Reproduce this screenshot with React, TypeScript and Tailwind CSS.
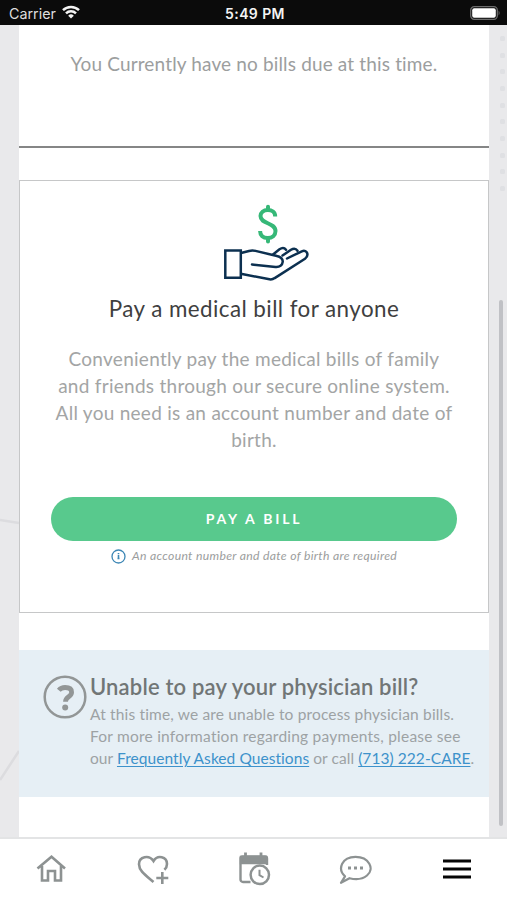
import type { ReactNode } from 'react';

const dots = [38, 55, 71, 88, 105, 121, 138, 155, 171, 188];

function StatusBar() {
  return (
    <header className="flex h-[25px] items-center justify-between bg-[#0b0b0b] pt-[3px] pr-[6px] pl-[9px] font-['Inter','Liberation_Sans',sans-serif] text-[#f4f4f4]">
      <div className="flex w-[120px] items-center gap-[6px]">
        <span className="text-[14.3px] leading-none text-[#dedede]">Carrier</span>
        <svg className="mt-[-3px] h-[14px] w-[18px]" viewBox="0 0 18 14" fill="none" stroke="#f4f4f4" strokeWidth="2.5">
          <path d="M1 5.2a11.4 11.4 0 0 1 16 0" />
          <path d="M4 8.4a7.1 7.1 0 0 1 10 0" />
          <path d="M6.2 10.7a4 4 0 0 1 5.6 0L9 13.5z" fill="#f4f4f4" stroke="none" />
        </svg>
      </div>
      <span className="text-[14px] leading-none font-semibold tracking-[0.4px]">5:49 PM</span>
      <div className="flex w-[120px] justify-end">
        <svg className="mt-[-2px] h-[16px] w-[32px]" viewBox="0 0 32 16">
          <rect x="1.7" y="1.7" width="26.6" height="12.6" rx="3.5" fill="none" stroke="#6b6b6b" strokeWidth="1.3" />
          <rect x="3.2" y="3.2" width="23.6" height="9.6" rx="2" fill="#fff" />
          <path d="M29.6 5.5q2 2.5 0 5z" fill="#6b6b6b" />
        </svg>
      </div>
    </header>
  );
}

function Backdrop() {
  return (
    <svg className="absolute inset-0 h-[900px] w-[507px]" viewBox="0 0 507 900" fill="none">
      {dots.map((y) => (
        <rect key={y} x="500" y={y - 2} width="5" height="5" rx="1.5" fill="#dfe0e3" />
      ))}
      <path d="M0 520l19 3M0 780l19-29" stroke="#dcdcdf" strokeWidth="2.5" />
    </svg>
  );
}

function HandIcon() {
  return (
    <svg className="ml-[202px] h-[80px] w-[90px]" viewBox="22 8 90 80" fill="none" strokeLinecap="round" strokeLinejoin="round">
      <g stroke="#36b878" strokeWidth="4">
        <path d="M75.2 21.4c0-4.2-3.3-6.3-7.4-6.3-4.4 0-7.3 2.5-7.3 6 0 8.2 15 6.200 15 15 0 4.300-3.400 7-7.800 7-4.600 0-7.600-2.700-7.600-7" strokeLinecap="butt" />
        <path d="M68 11.800v3M68 43.500v3" />
      </g>
      <g stroke="#0c3050" strokeWidth="2.500">
        <path d="M25.300 55.500h15.500v27.200H25.300z" strokeLinejoin="miter" />
        <path d="M42 57.800l7-1.800c2.500-.7 4-.7 6.500-.1L76 60.800c4.500 1 7 3 6.700 6-.3 3.300-3 5.500-7.200 5.100L52 69.500" />
        <path d="M42 79l27.500 5.300c2.200.4 3.500 0 5.200-1.200L105 63.800c4.200-3.200 2.500-9.800-3.200-7.500L87 63.500" />
        <path d="M73 59.500l6.500-5.200c2.500-1.700 5-1.500 6.500.5M82.500 60.500l8.500-5.700c2.500-1.600 5-1.300 6.500 1" />
      </g>
    </svg>
  );
}

function BillCard() {
  return (
    <section className="mt-[32px] flex h-[433px] flex-col border border-[#c6c7c8] pt-[22px]">
      <HandIcon />
      <h2 className="mt-[10px] text-center text-[22.400px] leading-8 tracking-[0.43px] whitespace-nowrap text-[#3f3f3f]">
        Pay a medical bill for anyone
      </h2>
      <p className="mt-[20px] text-center text-[19px] leading-[27px] tracking-[0.27px] whitespace-nowrap text-[#a3a5a5]">
        Conveniently pay the medical bills of family
        <br />
        and friends through our secure online system.
        <br />
        All you need is an account number and date of
        <br />
        birth.
      </p>
      <button className="mt-[44px] ml-[31px] h-[44px] w-[406px] shrink-0 rounded-full bg-[#58c98d] pb-[2px] text-[14px] font-bold tracking-[2.800px] text-white">
        PAY A BILL
      </button>
      <div className="mt-[7px] ml-[91px] flex items-center gap-[6px]">
        <svg className="h-[15px] w-[15px]" viewBox="0 0 15 15" fill="none" stroke="#3d87b5">
          <circle cx="7.500" cy="7.500" r="6.500" strokeWidth="1.300" />
          <path d="M7.500 4v1.300M7.500 6v4M6.500 9.500h2" strokeWidth="1.600" />
        </svg>
        <span className="text-[12.200px] leading-4 tracking-[0.32px] whitespace-nowrap text-[#9b9d9d] italic">
          An account number and date of birth are required
        </span>
      </div>
    </section>
  );
}

function Link({ children }: { children: ReactNode }) {
  return <a className="text-[#3d92cb] underline decoration-1 underline-offset-2">{children}</a>;
}

function PhysicianNotice() {
  return (
    <section className="mt-[37px] flex h-[147px] bg-[#e6eff5] pt-[24px] pl-[24px]">
      <svg className="mt-[1px] h-[44px] w-[44px] shrink-0" viewBox="0 0 44 44" fill="none" stroke="#929696">
        <circle cx="22" cy="22" r="20.300" strokeWidth="2.500" />
        <path d="M15.800 15.200c1.700-2 3.800-2.700 6.300-2.700 4 0 6.500 1.600 6.500 4.700 0 5-6.100 4.200-6.100 9.600" strokeWidth="4.800" />
        <circle cx="22.200" cy="32.500" r="3" fill="#929696" stroke="none" />
      </svg>
      <div className="mt-[-1px] ml-[3px] whitespace-nowrap">
        <h3 className="text-[22px] leading-[27px] font-semibold tracking-[0.17px] text-[#717676]">
          Unable to pay your physician bill?
        </h3>
        <p className="mt-[3px] text-[15.500px] leading-[22px] tracking-[0.16px] text-[#9da2a4]">
          At this time, we are unable to process physician bills.
          <br />
          <span className="tracking-[0.22px]">For more information regarding payments, please see</span>
          <br />
          <span className="tracking-[0.060px]">
            our <Link>Frequently Asked Questions</Link> or call <Link>(713) 222-CARE</Link>.
          </span>
        </p>
      </div>
    </section>
  );
}

function TabBar() {
  return (
    <nav className="relative flex h-[63px] items-center justify-between border-t-2 border-[#e3e4e5] bg-white pr-[32px] pb-[2px] pl-[33px]">
      {/* Home */}
      <svg className="h-[36px] w-[36px]" viewBox="0 0 36 36" fill="none" stroke="#8d9292" strokeWidth="2.600">
        <path d="M4.500 17.500L18.500 5.800 32 17.500M9 15v14.500h6V20h7v9.500h6V15" />
      </svg>
      {/* Favorites */}
      <svg className="h-[36px] w-[36px]" viewBox="0 0 36 36" fill="none" stroke="#8d9292" strokeWidth="2.600">
        <path d="M18.500 31C11 24.500 4 20 4 13.200 4 5.500 14 3.500 18.500 10 22.500 3.500 32 5.500 32 13c0 2-.7 4-2.600 5.700M27.300 21v12M21.300 27h12" />
      </svg>
      {/* Appointments */}
      <svg className="h-[36px] w-[36px]" viewBox="0 0 36 36" fill="none" stroke="#8d9292" strokeWidth="2.400">
        <path d="M9.500 1.500v5M25 1.500v5" strokeWidth="2.800" />
        <path d="M14.500 31H7a2.500 2.500 0 0 1-2.500-2.500V7.500A2 2 0 0 1 6.500 5.500h22.500a2 2 0 0 1 2 2V14" />
        <path d="M5 6h25v6H5z" fill="#8d9292" />
        <circle cx="23.800" cy="23.800" r="9.200" fill="#fff" strokeWidth="2.500" />
        <path d="M23.500 18.800v5.400l4 2.300" strokeWidth="2" />
      </svg>
      {/* Messages */}
      <svg className="h-[36px] w-[36px]" viewBox="0 0 36 36" fill="none" stroke="#8d9292">
        <path d="M7 25.300C-1 18 4 5.800 17.500 5.800S37 18 29 24.500c-4.500 3.700-11.500 4.200-17.500 2.700L3 31.800z" strokeWidth="2.200" strokeLinejoin="round" />
        <path d="M10 17h3M16 17h3M22 17h3" strokeWidth="3" />
      </svg>
      {/* Menu */}
      <svg className="h-[36px] w-[36px]" viewBox="0 0 36 36" stroke="#050505" strokeWidth="3">
        <path d="M4 10h28M4 18h28M4 26h28" />
      </svg>
    </nav>
  );
}

export default function App() {
  return (
    <div className="relative flex h-[900px] w-[507px] flex-col overflow-hidden bg-[#e9e9eb] font-['Lato','Liberation_Sans',sans-serif]">
      <Backdrop />
      <div className="relative">
        <StatusBar />
      </div>
      <main className="relative ml-[19px] h-[812px] w-[470px] shrink-0 bg-white">
        <div className="h-[123px] border-b-2 border-[#858686] pt-[25px] text-center text-[19px] leading-[27px] tracking-[0.15px] text-[#9c9e9e]">
          You Currently have no bills due at this time.
        </div>
        <BillCard />
        <PhysicianNotice />
      </main>
      <div className="absolute top-[300px] left-[499px] h-[526px] w-[4px] rounded-full bg-[#c0c1c5]" />
      <TabBar />
    </div>
  );
}
